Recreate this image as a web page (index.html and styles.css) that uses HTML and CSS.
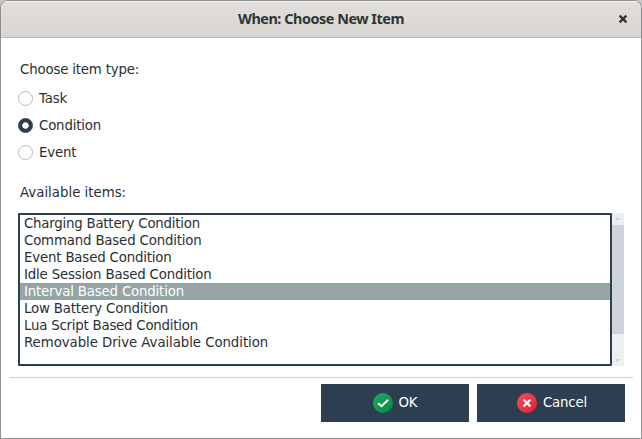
FILE: index.html
```html
<!DOCTYPE html>
<html lang="en">
<head>
<meta charset="utf-8">
<title>When: Choose New Item</title>
<link rel="stylesheet" href="styles.css">
</head>
<body>
<main class="window">
  <header class="titlebar">
    <h1>When: Choose New Item</h1>
    <button class="close" aria-label="Close"><svg width="10" height="10" viewBox="0 0 10 10"><path d="M1.6 1.6 8.4 8.4M8.4 1.6 1.6 8.4" fill="none" stroke="#2e3436" stroke-width="2.3"/></svg></button>
  </header>
  <section class="content">
    <p class="label">Choose item type:</p>
    <div class="radios">
      <label class="radio"><i class="dot"></i><span>Task</span></label>
      <label class="radio"><i class="dot checked"></i><span>Condition</span></label>
      <label class="radio"><i class="dot"></i><span>Event</span></label>
    </div>
    <p class="label available">Available items:</p>
    <div class="picker">
      <ul class="list">
        <li class="tight"><span>Charging Battery Condition</span></li>
        <li><span>Command Based Condition</span></li>
        <li><span>Event Based Condition</span></li>
        <li><span>Idle Session Based Condition</span></li>
        <li class="selected"><span>Interval Based Condition</span></li>
        <li><span>Low Battery Condition</span></li>
        <li class="tight"><span>Lua Script Based Condition</span></li>
        <li class="wide"><span>Removable Drive Available Condition</span></li>
      </ul>
      <div class="scrollbar">
        <svg width="12" height="12" viewBox="0 0 12 12"><path d="M5 4h1v1h1v1h1v1H3V6h1V5h1z" fill="#cfd3da"/></svg>
        <div class="thumb"></div>
        <svg class="down" width="12" height="12" viewBox="0 0 12 12"><path d="M3 5h5v1H7v1H6v1H5V7H4V6H3z" fill="#cfd3da"/></svg>
      </div>
    </div>
  </section>
  <footer class="actions">
    <button class="button"><svg width="20" height="20" viewBox="0 0 20 20"><defs><linearGradient id="green" x1="0" y1="0" x2="1" y2="1"><stop offset="0" stop-color="#21ad64"/><stop offset="1" stop-color="#078342"/></linearGradient></defs><circle cx="10" cy="10" r="10" fill="url(#green)"/><path d="M5.2 10.2 8.6 13.2 15.2 6.8" fill="none" stroke="#fff" stroke-width="2"/></svg><span>OK</span></button>
    <button class="button cancel"><svg width="20" height="20" viewBox="0 0 20 20"><defs><linearGradient id="red" x1="0" y1="0" x2="1" y2="1"><stop offset="0" stop-color="#f84f58"/><stop offset="1" stop-color="#e51e32"/></linearGradient></defs><circle cx="10" cy="10" r="10" fill="url(#red)"/><path d="M6.5 6.5 13.5 13.5M13.5 6.5 6.5 13.5" fill="none" stroke="#fff" stroke-width="2.2"/></svg><span>Cancel</span></button>
  </footer>
</main>
</body>
</html>
```
FILE: styles.css
```css
* { box-sizing: border-box; }
body {
  margin: 0;
  background: #c4c4c6;
  color: #2b2f33;
  font: 13.33px/17px "DejaVu Sans", sans-serif;
  letter-spacing: -0.17px;
}
p, h1, ul { margin: 0; padding: 0; }
svg { display: block; }
button { border: 0; padding: 0; font: inherit; letter-spacing: inherit; }
.window {
  display: flex;
  flex-direction: column;
  width: 642px;
  height: 439px;
  overflow: hidden;
  border: 1px solid #8f8f91;
  border-radius: 8px 8px 0 0;
  background: #fff;
}
.titlebar {
  display: grid;
  grid-template-columns: 36px 1fr 36px;
  align-items: center;
  height: 37px;
  background: linear-gradient(#e1dedb, #dad6d2);
  border-bottom: 1px solid #bfb8b1;
  box-shadow: inset 0 1px #f8f7f6;
}
.titlebar h1 {
  grid-column: 2;
  text-align: center;
  font: bold 14.4px/20px "Noto Sans", sans-serif;
  letter-spacing: -0.46px;
  color: #2e3436;
  white-space: nowrap;
}
.close {
  display: flex;
  justify-content: center;
  background: transparent;
}
.content { padding: 23px 17px 0; }
.label { padding-left: 2px; }
.radios {
  display: grid;
  grid-auto-rows: 27px;
  margin-top: 7px;
}
.radio {
  display: flex;
  align-items: center;
  gap: 6px;
}
.dot {
  width: 15px;
  height: 15px;
  border: 1px solid #bbb;
  border-radius: 50%;
}
.dot.checked {
  border-color: #2c3e50;
  background: radial-gradient(circle, #fff 2.8px, #2c3e50 3.6px);
}
.available { margin-top: 18px; letter-spacing: 0; }
.picker {
  display: flex;
  height: 153px;
  margin-top: 12px;
}
.list {
  width: 594px;
  border: 2px solid #2c3e50;
  border-radius: 1px;
  list-style: none;
}
.list li { height: 17px; padding-left: 4px; }
.list .selected { background: #95a5a6; color: #fff; }
.list .tight { letter-spacing: -0.22px; }
.list .wide { letter-spacing: -0.07px; }
.scrollbar {
  display: flex;
  flex-direction: column;
  width: 12px;
  background: #ecf0f1;
}
.thumb { height: 109px; background: #cfd3da; }
.down { margin-top: auto; }
.actions {
  display: flex;
  justify-content: flex-end;
  gap: 8px;
  margin: 11px 8px 0;
  padding: 6px 8px 0 0;
  border-top: 1px solid #d0d0d2;
}
.button {
  display: flex;
  align-items: center;
  justify-content: center;
  gap: 6px;
  width: 148px;
  height: 38px;
  background: #2c3e50;
  color: #fff;
}
.button span { padding-bottom: 2px; }
.cancel { padding-left: 2px; }
```
